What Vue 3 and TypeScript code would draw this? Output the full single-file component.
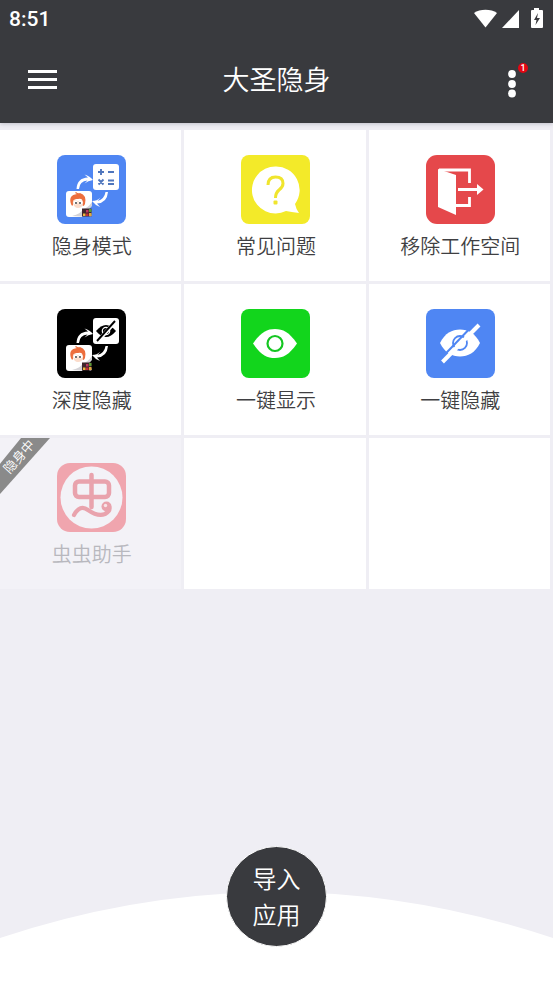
<script setup lang="ts">
import { ref } from 'vue'

type IconName = 'stealth' | 'faq' | 'exit' | 'deep' | 'show' | 'hide' | 'bug'

interface Tile {
  icon: IconName
  label: string
  hidden?: boolean
}

const tiles: Tile[] = [
  { icon: 'stealth', label: '隐身模式' },
  { icon: 'faq', label: '常见问题' },
  { icon: 'exit', label: '移除工作空间' },
  { icon: 'deep', label: '深度隐藏' },
  { icon: 'show', label: '一键显示' },
  { icon: 'hide', label: '一键隐藏' },
  { icon: 'bug', label: '虫虫助手', hidden: true },
]

const columns = 3
const emptyCells = (columns - (tiles.length % columns)) % columns
const unread = ref(1)

const backgrounds: Record<IconName, string> = {
  stealth: '#4f86f3',
  faq: '#f3ea29',
  exit: '#e5484b',
  deep: '#000000',
  show: '#12d51c',
  hide: '#4f86f3',
  bug: '#f0a5ae',
}
</script>

<template>
  <div class="screen">
    <header class="header">
      <div class="status">
        <span class="clock">8:51</span>
        <svg class="indicators" viewBox="0 0 70 22" aria-hidden="true">
          <path d="M0 5C6 .6 17 .6 23 5L11.500 19.500Z" fill="#fff" />
          <path d="M28 20L45 2V20Z" fill="#fff" />
          <path d="M60 0h5v2h3q1 0 1 1v16q0 1-1 1H58q-1 0-1-1V3q0-1 1-1h2Z" fill="#fff" />
          <path d="M64 5l-4 7h2.500l-1 5 4.500-7h-3Z" fill="#393a3e" />
        </svg>
      </div>
      <div class="toolbar">
        <button class="tool" type="button" aria-label="菜单">
          <svg width="30" height="24" viewBox="0 0 30 24">
            <path d="M1 2.500h29M1 10.500h29M1 18.500h29" stroke="#fff" stroke-width="2.800" />
          </svg>
        </button>
        <h1 class="title">大圣隐身</h1>
        <button class="tool more" type="button" aria-label="更多">
          <svg width="10" height="28" viewBox="0 0 10 28">
            <circle cx="5" cy="4" r="3.900" fill="#fff" />
            <circle cx="5" cy="14" r="3.900" fill="#fff" />
            <circle cx="5" cy="23.500" r="3.900" fill="#fff" />
          </svg>
          <span class="badge">{{ unread }}</span>
        </button>
      </div>
    </header>

    <main class="grid">
      <button
        v-for="tile in tiles"
        :key="tile.label"
        type="button"
        class="tile"
        :class="{ 'is-hidden': tile.hidden }"
      >
        <span v-if="tile.hidden" class="ribbon"><span class="ribbon-text">隐身中</span></span>
        <svg class="icon" viewBox="0 0 69 69" aria-hidden="true">
          <rect width="69" height="69" :rx="tile.icon === 'bug' ? 13 : tile.icon === 'exit' ? 11 : 8" :fill="backgrounds[tile.icon]" />

          <g v-if="tile.icon === 'stealth' || tile.icon === 'deep'">
            <rect x="36" y="9" width="26" height="26" rx="3" fill="#fff" />
            <g v-if="tile.icon === 'stealth'" stroke="#4f76bd" stroke-width="1.900">
              <path d="M41 17h6M44 14v6M51 17h6M41.500 24.500l5 5M46.500 24.500l-5 5M51 25.500h6M51 29h6" />
            </g>
            <g v-else>
              <path d="M39 22Q49 10 59 22Q49 34 39 22Z" fill="#000" />
              <circle cx="49" cy="22" r="3.700" fill="none" stroke="#fff" stroke-width="1.200" />
              <path d="M41 32L58 13" stroke="#fff" stroke-width="4" />
              <path d="M40 32L58 12" stroke="#000" stroke-width="1.900" />
            </g>
            <path d="M19.500 34Q20 23 31 22.500L27.500 19.500Q33 21 36 25Q31 25.500 27.500 28.500L30.500 25.500Q22.500 26 22 34Z" fill="#fff" />
            <path d="M51 37Q50 48 40 48.500L43 52Q38 50 35 46Q40 46 43.500 42.500L40.500 46Q47.500 44 48.500 37Z" fill="#fff" />
            <rect x="9" y="36" width="26" height="26" rx="3" fill="#fff" />
            <path d="M14 49Q11 40 20 39Q17 38 19 37Q21 39 23 38Q30 40 28 49Q26 53 25 49Q27 43 21 44Q15 43 16 50Q15 52 14 49Z" fill="#ed6e3d" />
            <path d="M16 48Q15 44 21 46Q27 44 26 49Q25 53 21 53Q17 53 16 48Z" fill="#fbdccb" />
            <circle cx="18.500" cy="47.500" r="2" fill="#fff" />
            <circle cx="23.500" cy="47.500" r="2" fill="#fff" />
            <circle cx="19" cy="48" r=".9" fill="#333" />
            <circle cx="23" cy="48" r=".9" fill="#333" />
            <path d="M15 61Q24 59 26 54Q31 53 35 47V58Q35 62 31 62Z" fill="#d4d3d7" />
            <path d="M25 62L35 51V59L32 62Z" :fill="backgrounds[tile.icon]" />
            <rect x="25" y="53.500" width="9.500" height="8" fill="#40262c" />
            <path d="M26 58.500h2.500v2.500h-2.500z" fill="#efb43d" />
            <path d="M29 58.500h2.500v2.500h-2.500z" fill="#c22b39" />
            <path d="M32 54h2.500v3h-2.500z" fill="#5a9b34" />
            <path d="M29 55h2.500v2.500h-2.500z" fill="#bd355d" />
            <path d="M32 58h2.500v3h-2.500z" fill="#e0a93c" />
          </g>

          <g v-else-if="tile.icon === 'faq'">
            <path d="M34.500 11.500A23.500 23.500 0 1 0 45 56Q50 57 58 58Q55 54 54 49A23.500 23.500 0 0 0 34.500 11.500Z" fill="#fff" />
            <path d="M27 30Q27 22 34.500 22Q42 22 42 28.500Q42 32 38 35Q34.500 38 34.500 43" fill="none" stroke="#f0e52d" stroke-width="3" />
            <rect x="32.500" y="45.500" width="4" height="4" rx="1" fill="#f0e52d" />
          </g>

          <g v-else-if="tile.icon === 'exit'" fill="none" stroke="#fff" stroke-width="2.800">
            <path d="M13 15H43.500V28M43.500 42V50.500H30M32 34.500H53" />
            <path d="M12 14L30 20V60L12 52Z" fill="#fff" stroke="none" />
            <path d="M51 29L57.500 34.500L51 40Z" fill="#fff" stroke="none" />
          </g>

          <g v-else-if="tile.icon === 'show'">
            <path d="M12 34.500C20 23 26 20 34 20S48 23 56 34.500C48 46 42 49 34 49S20 46 12 34.500Z" fill="#fff" />
            <circle cx="34" cy="34.500" r="7.500" fill="none" stroke="#15c621" stroke-width="2.200" />
          </g>

          <g v-else-if="tile.icon === 'hide'">
            <path d="M14 34C19 24 26 20.500 34 20.500S49 24 54 34C49 44 42 47.500 34 47.500S19 44 14 34Z" fill="#fff" />
            <circle cx="34" cy="34" r="7" fill="none" stroke="#4f86f3" stroke-width="1.800" />
            <path d="M13 51.500L50.500 12.500" stroke="#4f86f3" stroke-width="2" />
            <path d="M16.500 53L53 16" stroke="#fff" stroke-width="4" />
          </g>

          <g v-else>
            <circle cx="34.500" cy="34.500" r="31" fill="#f3f2f7" />
            <g fill="none" stroke="#e9a3ad" stroke-linecap="round" stroke-linejoin="round">
              <rect x="18" y="18.500" width="34" height="15.500" rx="4" stroke-width="4.500" />
              <path d="M34.500 12V44" stroke-width="4.500" />
              <path d="M17 52Q23 41 31 47Q41 54 48 51Q54 48 52 43" stroke-width="4.200" />
            </g>
            <circle cx="49.500" cy="43.500" r="5" fill="#e9a3ad" />
            <circle cx="48.500" cy="42.500" r="1.700" fill="#f8e5e8" />
          </g>
        </svg>
        <span class="label">{{ tile.label }}</span>
      </button>
      <div v-for="n in emptyCells" :key="`empty-${n}`" class="tile"></div>
    </main>

    <footer class="footer">
      <svg class="hill" viewBox="0 0 553 92" preserveAspectRatio="none" aria-hidden="true">
        <path d="M0 46Q276.500-46 553 46V92H0Z" fill="#fff" />
      </svg>
      <button class="import" type="button">导入<br />应用</button>
    </footer>
  </div>
</template>

<style>
body {
  background: #efeef4;
}
</style>

<style scoped>
.screen {
  display: flex;
  flex-direction: column;
  min-height: 100vh;
  background: #efeef4;
  font-family: Roboto, 'Noto Sans CJK SC', sans-serif;
}

button {
  margin: 0;
  padding: 0;
  border: 0;
  background: none;
  color: inherit;
  font: inherit;
}

.header {
  background: #393a3e;
  color: #fff;
  box-shadow: 0 1px 4px rgba(57, 58, 80, 0.25);
}

.status {
  display: flex;
  align-items: center;
  justify-content: space-between;
  height: 38px;
  padding: 0 9px;
}

.clock {
  font-size: 21px;
  font-weight: 500;
}

.indicators {
  width: 70px;
  height: 22px;
}

.toolbar {
  display: grid;
  grid-template-columns: 48px 1fr 50px;
  align-items: center;
  height: 85px;
  padding: 0 16px 0 18px;
}

.tool {
  position: relative;
  display: grid;
  place-items: center;
  height: 48px;
}

.more {
  padding-top: 6px;
}

.badge {
  position: absolute;
  top: 6px;
  right: 9px;
  width: 10px;
  height: 10px;
  border-radius: 50%;
  background: #e30613;
  font-size: 9px;
  font-weight: 500;
  line-height: 10px;
  text-align: center;
}

.title {
  margin: 0;
  font-size: 27px;
  font-weight: 350;
  line-height: 40px;
  text-align: center;
}

.grid {
  display: grid;
  grid-template-columns: repeat(3, 1fr);
  grid-auto-rows: 151px;
  gap: 3px;
  padding: 7px 3px 0 0;
}

.tile {
  position: relative;
  display: flex;
  flex-direction: column;
  align-items: center;
  gap: 8px;
  padding: 25px 0 0 2px;
  background: #fff;
  color: #3f3f42;
  overflow: hidden;
}

.icon {
  width: 69px;
  height: 69px;
}

.label {
  font-size: 20px;
  font-weight: 350;
  line-height: 30px;
}

.is-hidden {
  background: #f3f2f7;
  color: #b8b8be;
}

.ribbon {
  position: absolute;
  top: 0;
  left: 0;
  box-sizing: border-box;
  display: grid;
  place-content: center;
  width: 50px;
  height: 56px;
  padding: 0 11px 18px 0;
  background: #8a8a8a;
  clip-path: polygon(42% 0, 100% 0, 0 100%, 0 46%);
  color: #fff;
}

.ribbon-text {
  font-size: 13px;
  font-weight: 350;
  line-height: 14px;
  white-space: nowrap;
  transform: rotate(-48deg);
}

.footer {
  display: grid;
  margin-top: auto;
}

.hill {
  grid-area: 1 / 1;
  align-self: end;
  width: 100%;
  height: 92px;
}

.import {
  grid-area: 1 / 1;
  justify-self: center;
  z-index: 1;
  width: 101px;
  height: 101px;
  padding-top: 2px;
  margin-bottom: 37px;
  border: 1px solid #fff;
  border-radius: 50%;
  background: #393a3e;
  color: #fff;
  font-size: 24px;
  font-weight: 350;
  line-height: 36px;
}
</style>
